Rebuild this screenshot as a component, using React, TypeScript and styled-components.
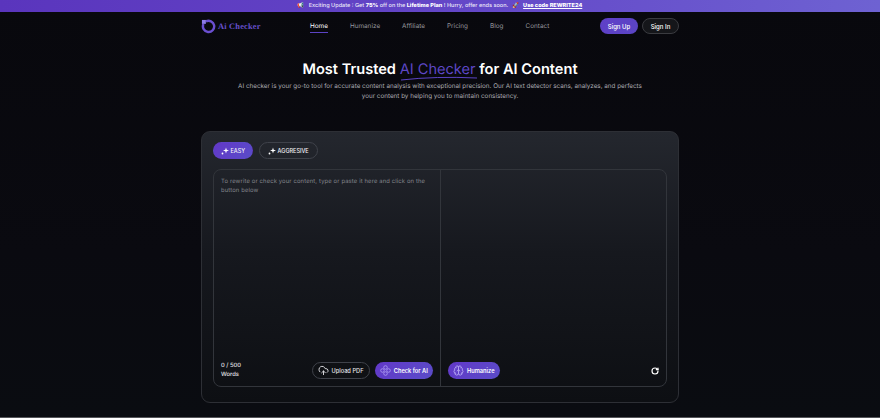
import styled, { createGlobalStyle } from "styled-components";
import { CloudUpload, Brain, RotateCw } from "lucide-react";

const GlobalStyle = createGlobalStyle`
  html, body {
    margin: 0;
    padding: 0;
    background: #09090e;
    color: #fff;
    font-family: "Inter", "Noto Sans", sans-serif;
    text-rendering: geometricPrecision;
    overflow: hidden;
  }
`;

const navItems = ["Home", "Humanize", "Affiliate", "Pricing", "Blog", "Contact"];

function SparkIcon() {
  return (
    <svg width="8" height="8" viewBox="0 0 16 16" fill="#fff">
      <path d="M10 1 L11.4 5.6 L16 7 L11.4 8.4 L10 13 L8.6 8.4 L4 7 L8.6 5.6 Z" />
      <circle cx="3" cy="13" r="1.8" />
    </svg>
  );
}

function PetalIcon() {
  return (
    <svg width="11" height="11" viewBox="0 0 16 16" fill="none" stroke="#a896f0" strokeWidth="1.3">
      <circle cx="8" cy="3.6" r="2.6" />
      <circle cx="8" cy="12.4" r="2.6" />
      <circle cx="3.6" cy="8" r="2.6" />
      <circle cx="12.4" cy="8" r="2.6" />
    </svg>
  );
}

export default function App() {
  return (
    <Page>
      <GlobalStyle />
      <Banner>
        <span>📢</span>
        <span>
          Exciting Update : Get <b>75%</b> off on the <b>Lifetime Plan</b> ! Hurry, offer ends soon.
        </span>
        <span>🚀</span>
        <BannerLink>Use code REWRITE24</BannerLink>
      </Banner>

      <Nav>
        <Logo>
          <svg width="15" height="15" viewBox="0 0 16 16" fill="none">
            <path d="M5.2 2.6 A6 6 0 1 1 2.6 5.4" stroke="#6a4fd0" strokeWidth="2.6" />
            <rect x="1" y="1" width="4.2" height="4.2" fill="#8d7be6" />
          </svg>
          <LogoText>Ai Checker</LogoText>
        </Logo>
        <NavLinks>
          {navItems.map((item) => (
            <NavLink key={item} $active={item === "Home"}>
              {item}
            </NavLink>
          ))}
        </NavLinks>
        <NavActions>
          <SignUp>Sign Up</SignUp>
          <SignIn>Sign In</SignIn>
        </NavActions>
      </Nav>

      <Hero>
        <Title>
          Most Trusted{" "}
          <Accent>
            AI Checker
            <svg width="78" height="5" viewBox="0 0 78 5" fill="none">
              <path d="M1 4 Q36 0 77 2" stroke="#5b43c4" strokeWidth="1" />
            </svg>
          </Accent>{" "}
          for AI Content
        </Title>
        <Subtitle>
          AI checker is your go-to tool for accurate content analysis with exceptional precision. Our AI text
          detector scans, analyzes, and perfects your content by helping you to maintain consistency.
        </Subtitle>
      </Hero>

      <Card>
        <Tabs>
          <Tab $active>
            <SparkIcon />
            EASY
          </Tab>
          <Tab>
            <SparkIcon />
            AGGRESIVE
          </Tab>
        </Tabs>
        <Editor>
          <Pane>
            <Placeholder>
              To rewrite or check your content, type or paste it here and click on the button below
            </Placeholder>
            <PaneFooter>
              <WordCount>
                0 / 500
                <br />
                Words
              </WordCount>
              <FooterActions>
                <OutlineButton>
                  <CloudUpload size={11} />
                  Upload PDF
                </OutlineButton>
                <PurpleButton $width={58}>
                  <PetalIcon />
                  Check for AI
                </PurpleButton>
              </FooterActions>
            </PaneFooter>
          </Pane>
          <Pane $right>
            <PaneFooter>
              <PurpleButton $width={52}>
                <Brain size={11} color="#b3a4f3" />
                Humanize
              </PurpleButton>
              <RotateCw size={8} color="#fff" strokeWidth={3.5} />
            </PaneFooter>
          </Pane>
        </Editor>
      </Card>
    </Page>
  );
}

const Page = styled.div`
  width: 880px;
  height: 418px;
  display: flex;
  flex-direction: column;
  align-items: center;
  overflow: hidden;
  background: linear-gradient(180deg, #08080d 0%, #0a0a10 60%, #0a0c11 100%);
  border-bottom: 1px solid #55565a;
  box-sizing: border-box;
`;

const Banner = styled.div`
  width: 100%;
  height: 12px;
  flex: none;
  display: flex;
  align-items: center;
  justify-content: center;
  gap: 4px;
  background: linear-gradient(90deg, #5a35bd 0%, #6448c8 55%, #6e62d2 100%);
  font-size: 5.55px;
  font-weight: 500;
  color: #e9e6f8;

  b {
    font-weight: 800;
    color: #fff;
  }
`;

const BannerLink = styled.span`
  font-weight: 800;
  color: #fff;
  text-decoration: underline;
`;

const Nav = styled.nav`
  width: 478px;
  height: 28px;
  flex: none;
  display: flex;
  align-items: center;
`;

const Logo = styled.div`
  width: 109px;
  display: flex;
  align-items: center;
  gap: 2px;
`;

const LogoText = styled.span`
  font-family: "Liberation Serif", "DejaVu Serif", serif;
  font-size: 8.4px;
  font-weight: 700;
  letter-spacing: 0.2px;
  color: #6650cc;
`;

const NavLinks = styled.div`
  display: flex;
  gap: 22px;
`;

const NavLink = styled.a<{ $active?: boolean }>`
  font-size: 6.4px;
  font-weight: 400;
  color: ${({ $active }) => ($active ? "#ffffff" : "#96969c")};
  padding: 3px 0 2px;
  border-bottom: 1px solid ${({ $active }) => ($active ? "#5b43c4" : "transparent")};
`;

const NavActions = styled.div`
  margin-left: auto;
  display: flex;
  gap: 4px;
`;

const SignUp = styled.button`
  width: 38px;
  height: 16px;
  padding: 0;
  border: 0;
  border-radius: 8px;
  background: linear-gradient(135deg, #5f3fc8, #5a45c4);
  color: #fff;
  font: 500 6px "Inter", sans-serif;
`;

const SignIn = styled(SignUp)`
  width: 37px;
  background: #15161a;
  border: 1px solid #3a3b40;
`;

const Hero = styled.header`
  flex: none;
  margin-top: 20px;
  display: flex;
  flex-direction: column;
  align-items: center;
`;

const Title = styled.h1`
  margin: 0;
  font-size: 14.6px;
  line-height: 18px;
  font-weight: 600;
  color: #fff;
  white-space: nowrap;
`;

const Accent = styled.span`
  position: relative;
  font-weight: 400;
  color: #5d47c6;

  svg {
    position: absolute;
    left: 0;
    bottom: -3px;
  }
`;

const Subtitle = styled.p`
  width: 412px;
  margin: 3px 0 0;
  font-size: 6.3px;
  line-height: 10px;
  text-align: center;
  color: #a9a9b0;
`;

const Card = styled.section`
  width: 478px;
  height: 272px;
  flex: none;
  margin-top: 30px;
  padding: 10px 11px 15px;
  box-sizing: border-box;
  display: flex;
  flex-direction: column;
  gap: 10px;
  border: 1px solid #2d2f35;
  border-radius: 9px;
  background: linear-gradient(180deg, #24272e 0%, #16181e 45%, #0d0f13 100%);
`;

const Tabs = styled.div`
  display: flex;
  gap: 6px;
`;

const Tab = styled.button<{ $active?: boolean }>`
  height: 17px;
  padding: 0 ${({ $active }) => ($active ? "6.5px" : "8px")};
  display: flex;
  align-items: center;
  gap: 2px;
  border-radius: 9px;
  border: 1px solid ${({ $active }) => ($active ? "transparent" : "#3f424a")};
  background: ${({ $active }) =>
    $active ? "linear-gradient(135deg, #6238c8, #5a4cc8)" : "transparent"};
  color: #f2f2f6;
  font: 500 5.5px "Inter", sans-serif;
`;

const Editor = styled.div`
  flex: 1;
  display: flex;
  border: 1px solid #32353b;
  border-radius: 8px;
  overflow: hidden;
`;

const Pane = styled.div<{ $right?: boolean }>`
  width: 227px;
  padding: 8px 7px 7px;
  box-sizing: border-box;
  display: flex;
  flex-direction: column;
  border-left: ${({ $right }) => ($right ? "1px solid #32353b" : "0")};
`;

const Placeholder = styled.p`
  margin: 0;
  font-size: 5.85px;
  letter-spacing: 0.14px;
  line-height: 8.6px;
  color: #83858c;
`;

const PaneFooter = styled.div`
  margin-top: auto;
  display: flex;
  align-items: center;
  justify-content: space-between;
`;

const WordCount = styled.div`
  font-size: 5.8px;
  line-height: 8.5px;
  font-weight: 500;
  color: #e4e4e8;
`;

const FooterActions = styled.div`
  display: flex;
  gap: 5px;
`;

const OutlineButton = styled.button`
  width: 58px;
  height: 17px;
  padding: 0;
  display: flex;
  align-items: center;
  justify-content: center;
  gap: 2px;
  border: 1px solid #3f424a;
  border-radius: 9px;
  background: #0f1115;
  color: #e4e4e8;
  font: 500 5.7px "Inter", sans-serif;

  svg {
    color: #e4e4e8;
  }
`;

const PurpleButton = styled.button<{ $width: number }>`
  width: ${({ $width }) => $width}px;
  height: 17px;
  padding: 0;
  display: flex;
  align-items: center;
  justify-content: center;
  gap: 2.5px;
  border: 0;
  border-radius: 9px;
  background: linear-gradient(135deg, #6238c8, #5a4cc8);
  color: #fff;
  font: 600 5.7px "Inter", sans-serif;
`;
